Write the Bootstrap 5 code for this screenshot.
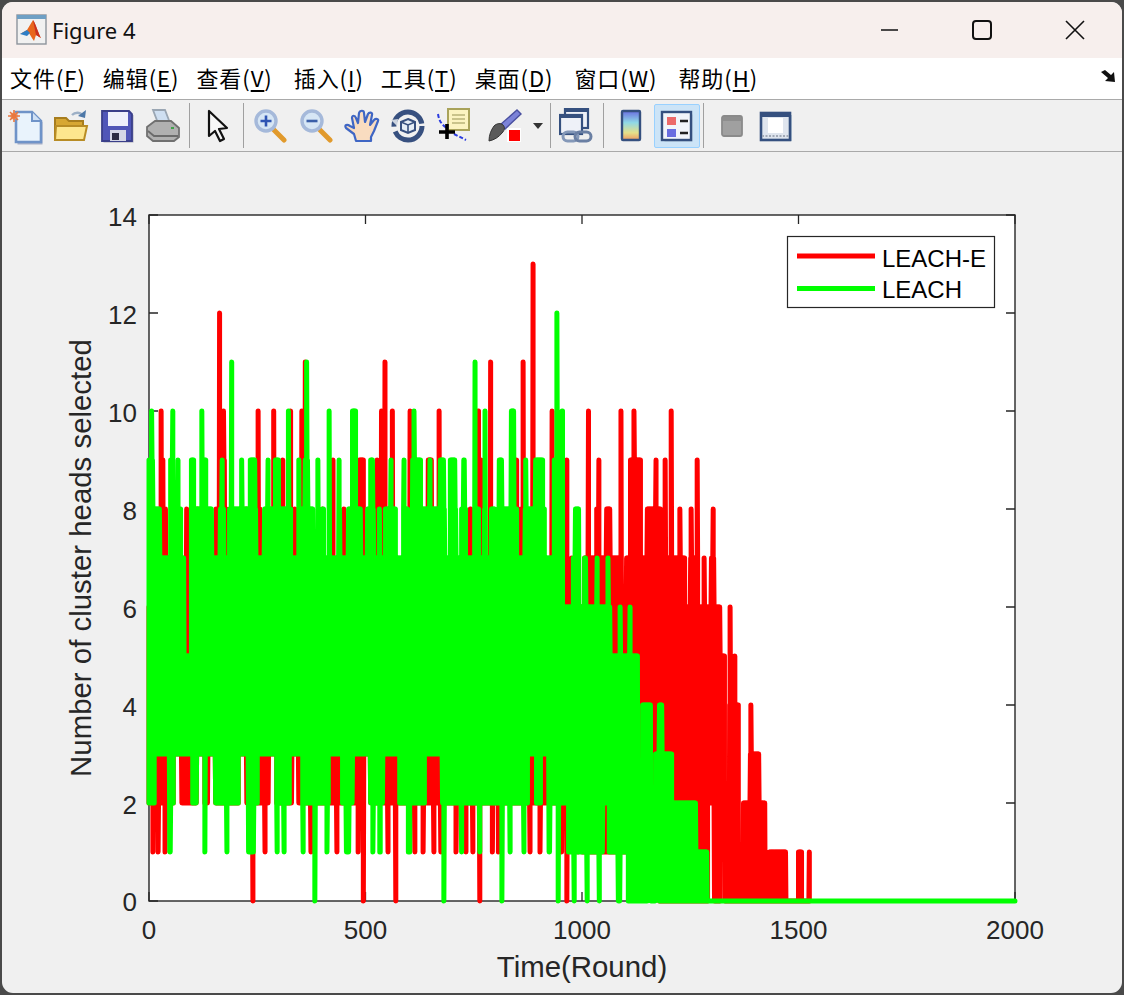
<!DOCTYPE html>
<html lang="zh">
<head>
<meta charset="utf-8">
<title>Figure 4</title>
<link href="https://cdn.jsdelivr.net/npm/bootstrap@5.3.0/dist/css/bootstrap.min.css" rel="stylesheet">
<style>
html,body{margin:0;height:100%;background:#4a4a4a;overflow:hidden}
.win{position:relative;margin:2px;height:991px;background:#f0f0f0;border-radius:11px;overflow:hidden;font-family:"Liberation Sans",sans-serif}
.titlebar{height:56px;background:#f7efed;color:#111;font-family:"Noto Sans",sans-serif;font-size:22px;padding-left:14px}
.titlebar .ttl{margin-left:4px;padding-top:1px}
.wc{width:93px;height:56px}
.wcs{margin-right:1px}
.menubar{height:42px;background:#fff;border-bottom:1.5px solid #a9a9a9;font-family:"Noto Sans CJK SC",sans-serif;font-size:22px;letter-spacing:.95px;color:#000;padding:0 0 4px 8px;gap:17px;line-height:1}
.menubar u{text-underline-offset:3px}
.toolbar{height:52px;border-bottom:1.5px solid #a9a9a9;background:#f0f0f0;flex-wrap:nowrap}
.tb{width:46px;height:44px;padding:0;border:1px solid transparent;border-radius:2px;flex:none;display:flex;align-items:center;justify-content:center}
.tb svg{display:block;filter:blur(.35px)}
.tb.on{background:#cce4f7;border-color:#99d1ff}
.tb.w50{width:50px}.tb.w48{width:48px}.tb.w38{width:38px}.tb.w18{width:18px}.tb.w47{width:47px}
.sep{width:1px;height:45px;background:#a0a0a0;margin:0 3px;flex:none}
.sep.tight{margin-left:0}
.plot{display:block;width:1120px;height:841px}
.plot text{font-family:"Liberation Sans",sans-serif;fill:#262626}
.tick{font-size:26px}
.lab{font-size:29.4px}
.leg{font-size:24px;fill:#000!important}
</style>
</head>
<body>
<div class="win d-flex flex-column">
  <div class="titlebar d-flex align-items-center flex-none">
    <svg width="32" height="32" viewBox="0 0 32 32"><rect x="1" y="1" width="29" height="29" fill="#f1f1f1" stroke="#8d949c" stroke-width="1.4"/><rect x="1" y="1" width="29" height="4" fill="#6f9fc4"/><path d="M4 20l7-4 6-10c2 2 6 15 8 18l-5-3-2 6c-3-4-4-7-6-9z" fill="#e8661c"/><path d="M4 20l7-4 3 3-3 3z" fill="#2d7ec6"/><path d="M17 6c2 2 6 15 8 18l-5-3z" fill="#c9301f"/></svg>
    <span class="ttl">Figure 4</span>
    <div class="ms-auto d-flex align-items-center wcs">
      <div class="wc d-flex align-items-center justify-content-center"><svg width="18" height="18" viewBox="0 0 18 18"><path d="M1 9h17" stroke="#111" stroke-width="1.5"/></svg></div>
      <div class="wc d-flex align-items-center justify-content-center"><svg width="20" height="20" viewBox="0 0 20 20"><rect x="1" y="1" width="18" height="18" rx="3" fill="none" stroke="#111" stroke-width="2"/></svg></div>
      <div class="wc d-flex align-items-center justify-content-center"><svg width="20" height="20" viewBox="0 0 20 20"><path d="M1 1l18 18M19 1L1 19" stroke="#111" stroke-width="1.6"/></svg></div>
    </div>
  </div>
  <div class="menubar d-flex align-items-center">
    <span>文件(<u>F</u>)</span><span>编辑(<u>E</u>)</span><span class="me-1">查看(<u>V</u>)</span><span>插入(<u>I</u>)</span><span>工具(<u>T</u>)</span><span class="me-1">桌面(<u>D</u>)</span><span class="me-1">窗口(<u>W</u>)</span><span>帮助(<u>H</u>)</span>
    <svg class="ms-auto me-1" width="18" height="15" viewBox="0 0 18 15"><path d="M1 3l4-2 6 5 3-3 1 10-10-1 3-3z" fill="#111"/></svg>
  </div>
  <div class="toolbar btn-toolbar align-items-center">
    <div class="tb"><svg width="38" height="38" viewBox="0 0 38 38"><path d="M10 5h16l9 9v22H10z" fill="#a8b0c8" transform="translate(1.5 1.5)"/><path d="M10 5h16l9 9v21H10z" fill="#e9f3fc" stroke="#6f93c8" stroke-width="2.6"/><path d="M26 5v9h9" fill="#cfe0f4" stroke="#6f93c8" stroke-width="2"/><circle cx="8" cy="9" r="3.6" fill="#f3a06a"/><path d="M8 3v12M2 9h12M4 5l8 8M12 5l-8 8" stroke="#e9773f" stroke-width="1.6"/></svg></div>
    <div class="tb"><svg width="36" height="36" viewBox="0 0 36 36"><path d="M19 7c3-3 8-3 10 0" fill="none" stroke="#9db0c6" stroke-width="2.4"/><path d="M33 2l-1 8-7-2z" fill="#4d78a8"/><path d="M2 10h11l3 3h14v19H2z" fill="#d7a733" stroke="#a77d1e" stroke-width="2"/><path d="M3 18h31l-3 14H2z" fill="#fde68e" stroke="#b88c25" stroke-width="2"/></svg></div>
    <div class="tb"><svg width="36" height="36" viewBox="0 0 36 36"><path d="M3 3h27l3 3v27H3z" fill="#a9a9b7" transform="translate(1.5 1.5)"/><path d="M3 3h27l3 3v27H3z" fill="#5056b8" stroke="#3a3f8a" stroke-width="1.8"/><rect x="9" y="4" width="20" height="14" fill="#eef0fb"/><rect x="11" y="22" width="16" height="11" fill="#d4d6e6"/><rect x="13" y="25" width="7" height="7" fill="#2c2c44"/></svg></div>
    <div class="tb"><svg width="36" height="36" viewBox="0 0 36 36"><path d="M8 2h12l5 13H13z" fill="#cfdff1" stroke="#9aa6b3" stroke-width="1.8"/><path d="M2 19l8-6h16l8 7v9l-5 4H8l-6-5z" fill="#b0b0b0" stroke="#707070" stroke-width="1.8"/><path d="M3 23l6 5h24" fill="none" stroke="#6b6b6b" stroke-width="1.8"/><rect x="26" y="19" width="3" height="2" fill="#3fa14b"/></svg></div>
    <div class="sep"></div>
    <div class="tb w50"><svg width="30" height="34" viewBox="0 0 30 34"><path d="M6 2v25l6-5 5 10 4-2-5-10 8-1z" fill="#f7f7f7" stroke="#111" stroke-width="2.2" stroke-linejoin="round"/></svg></div>
    <div class="sep tight"></div>
    <div class="tb"><svg width="36" height="36" viewBox="0 0 36 36"><path d="M21 21l11 11" stroke="#e19a2c" stroke-width="5" stroke-linecap="round"/><circle cx="14" cy="13" r="10" fill="#d6e6f5" stroke="#a5b9da" stroke-width="3.4"/><path d="M8.5 13h11M14 7.5v11" stroke="#2f55b3" stroke-width="2.6"/></svg></div>
    <div class="tb"><svg width="36" height="36" viewBox="0 0 36 36"><path d="M21 21l11 11" stroke="#e19a2c" stroke-width="5" stroke-linecap="round"/><circle cx="14" cy="13" r="10" fill="#d6e6f5" stroke="#a5b9da" stroke-width="3.4"/><path d="M8.5 13h11" stroke="#3a5fa8" stroke-width="2.6"/></svg></div>
    <div class="tb"><svg width="38" height="36" viewBox="0 0 38 36"><path d="M13 33l-2-7-8-6c-2-3 1-4 4-2l4 2-2-10c0-3 3-3 4 0l2 5 1-10c1-3 5-3 5 0l1 9 3-8c1-2 5-2 4 1l-2 10 4-5c2-2 5-1 4 1l-4 10-3 6v4z" fill="#f9dcc0" stroke="#3f66c4" stroke-width="2.2" stroke-linejoin="round"/></svg></div>
    <div class="tb"><svg width="36" height="36" viewBox="0 0 36 36"><circle cx="18" cy="18" r="14" fill="none" stroke="#37507f" stroke-width="5" stroke-dasharray="38 5 42 3"/><path d="M1 12l7-1-1 7z" fill="#ccd3de"/><path d="M18 11l7 3v8l-7 3-7-3v-8z" fill="#e5edf6" stroke="#37507f" stroke-width="2"/><path d="M11 14l7 3 7-3M18 17v8" fill="none" stroke="#37507f" stroke-width="1.6"/></svg></div>
    <div class="tb"><svg width="36" height="36" viewBox="0 0 36 36"><rect x="12" y="1" width="21" height="21" fill="#fbf3c0" stroke="#a9a35a" stroke-width="2"/><path d="M16 7h13M16 11h13M16 15h13" stroke="#b9b478"  stroke-width="1.6"/><path d="M2 6c1 7 4 11 9 14M18 26l12 6" fill="none" stroke="#2b3ce0" stroke-width="2" stroke-dasharray="4 2"/><path d="M11 16v15M3 24h16" stroke="#000" stroke-width="3.6"/></svg></div>
    <div class="tb w48 ms-1"><svg width="36" height="36" viewBox="0 0 36 36"><path d="M13 17L30 2l4 4-16 15z" fill="#7c83d8" stroke="#4a50a0" stroke-width="1.4"/><path d="M2 33c0-6 2-11 5-15 3-3 7-3 9-1 2 2 2 5-1 8-3 4-8 7-13 8z" fill="#5a5a5a" stroke="#333" stroke-width="1"/><rect x="20" y="20" width="14" height="14" fill="#fff"/><rect x="22" y="22" width="11" height="11" fill="#f00"/></svg></div>
    <div class="tb w18"><svg width="12" height="8" viewBox="0 0 12 8"><path d="M1 1h10L6 7z" fill="#333"/></svg></div>
    <div class="sep"></div>
    <div class="tb"><svg width="36" height="36" viewBox="0 0 36 36"><rect x="6" y="1" width="23" height="19" fill="#eef1f8" stroke="#35507f" stroke-width="2.2"/><rect x="6" y="1" width="23" height="3" fill="#35507f"/><rect x="1" y="7" width="22" height="19" fill="#eef1f8" stroke="#35507f" stroke-width="2.2"/><rect x="1" y="7" width="22" height="3" fill="#35507f"/><rect x="4" y="24" width="15" height="9" rx="4.5" fill="none" stroke="#8498b8" stroke-width="3"/><rect x="16" y="24" width="16" height="9" rx="4.5" fill="none" stroke="#6a7fa3" stroke-width="3"/></svg></div>
    <div class="sep"></div>
    <div class="tb w47"><svg width="24" height="34" viewBox="0 0 24 34"><defs><linearGradient id="cb" x1="0" y1="0" x2="0" y2="1"><stop offset="0" stop-color="#6a6ee0"/><stop offset=".4" stop-color="#8fd8e6"/><stop offset=".75" stop-color="#e5e08a"/><stop offset="1" stop-color="#ee9a62"/></linearGradient></defs><rect x="3" y="2" width="18" height="29" rx="1" fill="url(#cb)" stroke="#35507f" stroke-width="2.4"/></svg></div>
    <div class="tb on"><svg width="34" height="34" viewBox="0 0 34 34"><rect x="3" y="4" width="28" height="27" fill="#a7bfd4" transform="translate(1.5 1.5)"/><rect x="2" y="3" width="29" height="28" fill="#f2f5fa" stroke="#35507f" stroke-width="2.4"/><rect x="7" y="8" width="9" height="8" fill="#ec6a6a"/><rect x="7" y="20" width="9" height="8" fill="#6a6ee0"/><path d="M20 12h8M20 24h8" stroke="#222" stroke-width="2.4"/></svg></div>
    <div class="sep"></div>
    <div class="tb w50"><svg width="26" height="26" viewBox="0 0 26 26"><rect x="3" y="3" width="20" height="20" rx="2" fill="#a0a0a0" stroke="#8a8a8a" stroke-width="1.8"/><rect x="4" y="4" width="18" height="4" fill="#8e8e8e"/></svg></div>
    <div class="tb w38"><svg width="34" height="34" viewBox="0 0 34 34"><rect x="3" y="5" width="29" height="26" fill="#bccad8" transform="translate(1 1)"/><rect x="2" y="4" width="29" height="27" fill="#dfe5ee" stroke="#35507f" stroke-width="2.6"/><rect x="2" y="4" width="29" height="4" fill="#35507f"/><rect x="9" y="9" width="15" height="15" fill="#fff"/><path d="M3 27h27" stroke="#a1a9b6" stroke-width="2" stroke-dasharray="2 1.5"/></svg></div>
  </div>
  <svg class="plot flex-fill" viewBox="2 152 1120 841" xmlns="http://www.w3.org/2000/svg">
    <rect x="149" y="215" width="866" height="686" fill="#fff" stroke="#262626" stroke-width="1.4"/>
    <g id="ticks" stroke="#262626" stroke-width="1.3" fill="none"></g>
    <path id="sRed" fill="none" stroke="#f00" stroke-width="5" stroke-linejoin="round" stroke-linecap="round"/>
    <path id="sGreen" fill="none" stroke="#0f0" stroke-width="5" stroke-linejoin="round" stroke-linecap="round"/>
    <g class="tick" text-anchor="end">
      <text x="137" y="226">14</text><text x="137" y="324">12</text><text x="137" y="422">10</text><text x="137" y="520">8</text><text x="137" y="618">6</text><text x="137" y="716">4</text><text x="137" y="814">2</text><text x="137" y="911">0</text>
    </g>
    <g class="tick" text-anchor="middle">
      <text x="149" y="939">0</text><text x="365.5" y="939">500</text><text x="582" y="939">1000</text><text x="798.5" y="939">1500</text><text x="1015" y="939">2000</text>
    </g>
    <text class="lab" text-anchor="middle" x="582" y="977">Time(Round)</text>
    <text class="lab" text-anchor="middle" transform="translate(91 558) rotate(-90)">Number of cluster heads selected</text>
    <rect x="787.5" y="236.5" width="207" height="71" fill="#fff" stroke="#262626" stroke-width="1.2"/>
    <path d="M797 256h78" stroke="#f00" stroke-width="5"/>
    <path d="M797 288.5h78" stroke="#0f0" stroke-width="5"/>
    <text class="leg" x="882" y="267">LEACH-E</text>
    <text class="leg" x="882" y="298">LEACH</text>
  </svg>
</div>
<script src="https://cdn.jsdelivr.net/npm/bootstrap@5.3.0/dist/js/bootstrap.bundle.min.js"></script>
<script>
(function(){
  var X0=149,DX=866/2000,INS=2.5,Y=function(v){return 901-49*v};
  // Each entry: a number is a single spike; [a,b] is the painted extent of a run of samples.
  function norm(spec){
    var out=[];
    Object.keys(spec).forEach(function(l){spec[l].forEach(function(it){
      var a,b;
      if(typeof it==='number'){a=b=it}
      else if(it[1]-it[0]<2*INS){a=b=(it[0]+it[1])/2}
      else{a=it[0]+INS;b=it[1]-INS}
      out.push([a-DX/2-.01,b+DX/2+.01,+l]);
    })});
    return out;
  }
  function hi(t,x){var m=0;t.forEach(function(r){if(x>=r[0]&&x<=r[1]&&r[2]>m)m=r[2]});return m}
  function lo(t,x,d){var m=d;t.forEach(function(r){if(x>=r[0]&&x<=r[1]&&r[2]<m)m=r[2]});return m}
  var slits=[[176,179],[199,202],[210,213],[241,244],[271,274],[294,296],[366,368]];
  var raised=[[157,167],[184,190],[202,210],[245,248],[260,269],[292,300],[331,340],[355,367],[385,397],[427,440],[530,534],[543,547]];
  function within(list,x){return list.some(function(s){return x>s[0]-INS&&x<s[1]+INS})}

  var gTop=norm({
    12:[556.7],
    11:[231.7,306.7,475],
    10:[151.7,172.7,201.7,288.3,329,[350,358],414,485,[509,516],562.3],
    9:[[146,155],[168,175],178,[189,196],[200,208],222,241.7,[248,257],268,[273,281],299,[303,310],318,339,[350,358],[368,375],391,404,[410,423],430,[438,446],[448,457],464,[497,504],[509,516],525.7,[533,545],[552,560]],
    8:[[146,162],[168,183],[189,214],[218,226],[227,258],[262,293],[297,315],[320,326],[337,342],[346,363],[365,376],[377,382],[383,398],[401,410],[410,447],[448,458],[459,468],[473,481],[482,487],[489,497],[497,519],[523,547],[552,560],[573,581]],
    7:[[146,186],[189,565],[571,580],[582,588],597,608],
    6:[[146,186],[189,612],620,630],
    5:[[146,640]],
    4:[[640,653],[657,664]],
    3:[[653,674]],
    2:[[664,698]],
    1:[[664,709]]
  });
  var gLow=norm({
    0:[315,444,501.7,558.3,574.3,587.3,599.3,[616,622],[626,650],[657,709],[706,1020]],
    1:[170,205,227,[246,256],277,284,303,327,[344,351],373,380,[406,412],461.7,480,510,524,549.3,[566,605],[607,712]]
  });
  var rTop=norm({
    13:[533],
    12:[219.5],
    11:[305.5,385,490.7,523.3],
    10:[161,223.3,258,273.7,290.7,301.7,[379,384],392.3,410,439.3,478.3,552.3,588.3,621,634,671],
    9:[[218,227],282.7,333,[357,366],[360,365],[375,379],[426,434],481,516.7,567,599,[628,643],656,665,697,163],
    8:[[162,168],186.7,197.5,216,226.7,246.5,260,295,344,322.7,[468,473],[519,523],596.7,[604,612],[645,663],680,691,713],
    7:[571.5,[582,623],[624,687],[688,700],704,[709,716]],
    6:[[146,722],730],
    5:[[716,727],735],
    4:[[727,741],751],
    3:[[748,761]],
    2:[[741,767]],
    1:[[767,788],[796,804],[807,812]]
  });
  var rLow=norm({
    0:[253,363.5,396,480,566.7,[657,710],[712,722],[724,812]],
    1:[153,158,165,265,311,337,358,388,415,423,434,440.7,456,466,472.7,492.3,498.3,530,540,561.7,578,[580,660]]
  });
  function build(top,low,stopAt,isGreen){
    var d=[];
    for(var r=0;r<=2000;r++){
      var x=X0+r*DX;
      if(x>stopAt)break;
      var dflt=within(slits,x)?3:2;
      if(isGreen&&within(raised,x))dflt=3;
      var t=hi(top,x),b=lo(low,x,dflt);
      if(b>t)b=t;
      var a=r%2?[t,b]:[b,t];
      var px=x.toFixed(2);
      d.push((d.length?'L':'M')+px+' '+Y(a[0]));
      if(a[1]!==a[0])d.push('L'+px+' '+Y(a[1]));
    }
    return d.join('');
  }
  document.getElementById('sRed').setAttribute('d',build(rTop,rLow,809.5,false));
  document.getElementById('sGreen').setAttribute('d',build(gTop,gLow,1015.1,true));
  var t='';
  [149,365.5,582,798.5,1015].forEach(function(x){t+='M'+x+' 901v-9M'+x+' 215v9'});
  for(var v=0;v<=14;v+=2){var y=Y(v);t+='M149 '+y+'h9M1015 '+y+'h-9'}
  var p=document.createElementNS('http://www.w3.org/2000/svg','path');p.setAttribute('d',t);
  document.getElementById('ticks').appendChild(p);
})();
</script>
</body>
</html>
